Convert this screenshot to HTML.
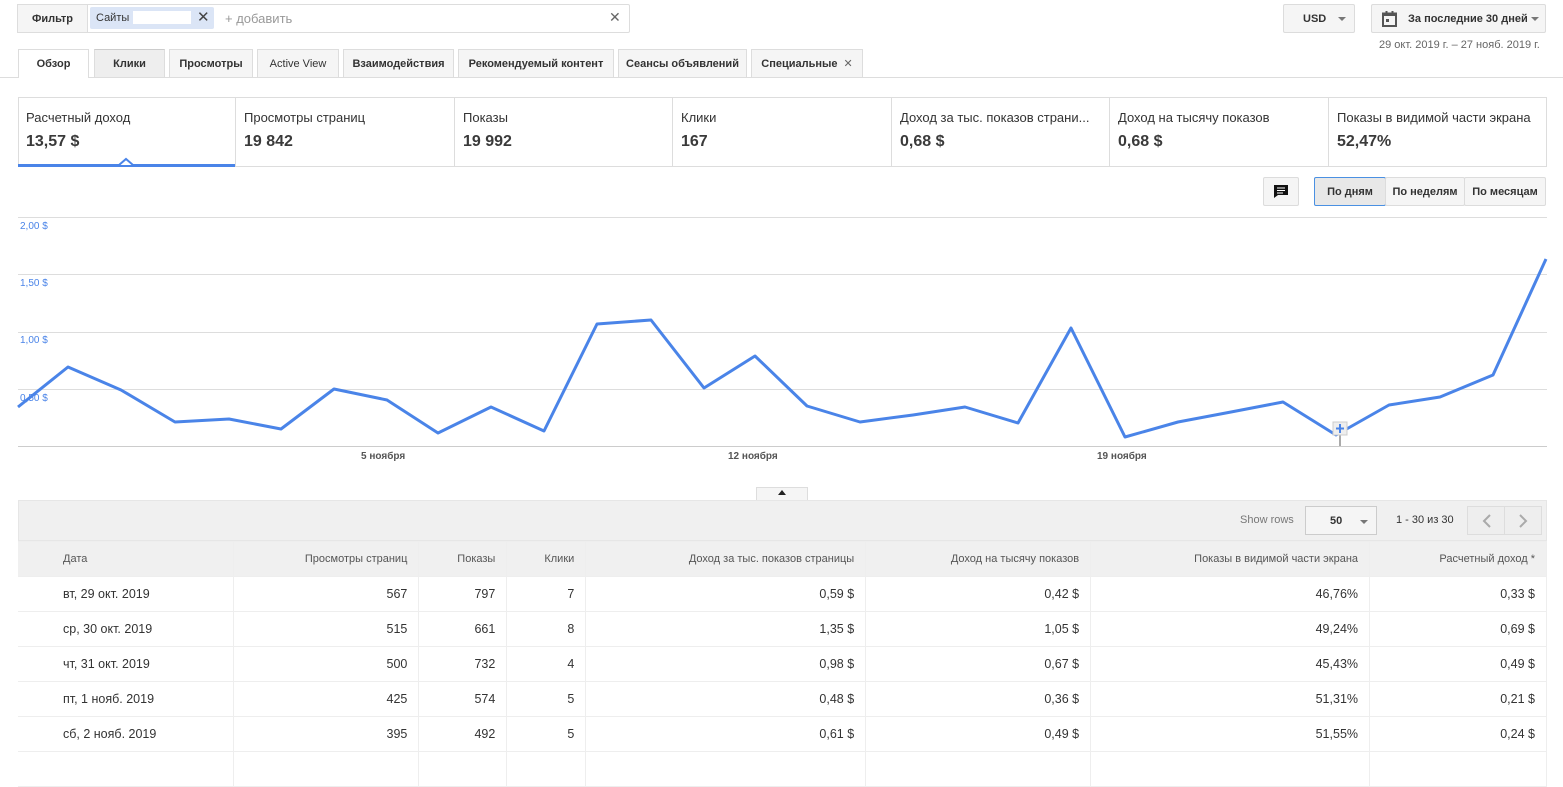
<!DOCTYPE html>
<html><head><meta charset="utf-8"><style>
*{box-sizing:border-box;margin:0;padding:0}
body{width:1563px;height:759px;overflow:hidden;background:#fff;font-family:"Liberation Sans",sans-serif;color:#333;position:relative;font-size:12px}
.a{position:absolute}
.btn{position:absolute;background:#f5f5f5;border:1px solid #dcdcdc;border-radius:2px;font-weight:bold;font-size:11px;color:#333;display:flex;align-items:center;justify-content:center}
.tab{position:absolute;top:49px;height:28px;background:#f5f5f5;border:1px solid #ddd;border-bottom:none;font-size:11px;font-weight:bold;color:#333;display:flex;align-items:center;justify-content:center}
.card{position:absolute;top:97px;height:70px;border-right:1px solid #ddd}
.card .l{position:absolute;left:8px;top:13px;font-size:13px;color:#333;white-space:nowrap}
.card .v{position:absolute;left:8px;top:36px;font-size:16px;font-weight:bold;color:#3a3a3a}
.gl{position:absolute;left:18px;width:1529px;height:1px;background:#ddd}
.yl{position:absolute;left:20px;font-size:10px;color:#4a84e8}
.xl{position:absolute;top:451px;font-size:10px;font-weight:bold;color:#555}
table{position:absolute;left:18px;top:541px;width:1529px;border-collapse:collapse;font-size:12px}
td,th{height:35px;border:1px solid #eee;text-align:right;padding-right:11px;white-space:nowrap}
th{background:#f0f0f0;font-size:11px;font-weight:normal;color:#555}
td:first-child,th:first-child{text-align:left;padding-left:45px;border-left:none}
td{color:#333;font-size:12.5px}
</style></head><body>
<div class="a" style="left:17px;top:4px;width:613px;height:29px;border:1px solid #ddd;border-radius:2px"></div>
<div class="a" style="left:17px;top:4px;width:71px;height:29px;background:#f5f5f5;border:1px solid #ddd;font-weight:bold;font-size:11px;display:flex;align-items:center;justify-content:center">Фильтр</div>
<div class="a" style="left:90px;top:7px;width:124px;height:22px;background:#dbe5f6;border-radius:2px;font-size:11px;padding:5px 6px;color:#333">Сайты</div>
<div class="a" style="left:133px;top:11px;width:58px;height:13px;background:#fff"></div>
<div class="a" style="left:197px;top:8px;font-size:15px;color:#444">✕</div>
<div class="a" style="left:225px;top:11px;font-size:13px;color:#999">+ добавить</div>
<div class="a" style="left:609px;top:9px;font-size:14px;color:#666">✕</div>
<div class="btn" style="left:1283px;top:4px;width:72px;height:29px;justify-content:flex-start;padding-left:19px">USD<span style="position:absolute;right:8px;top:12px;border:4px solid transparent;border-top:4px solid #777"></span></div>
<div class="btn" style="left:1371px;top:4px;width:175px;height:29px;justify-content:flex-start;padding-left:36px">За последние 30 дней<span style="position:absolute;right:6px;top:12px;border:4px solid transparent;border-top:4px solid #777"></span>
<svg class="a" style="left:10px;top:6px" width="15" height="16" viewBox="0 0 15 16"><rect x="1" y="2.5" width="13" height="12.5" fill="none" stroke="#555" stroke-width="2"/><rect x="1" y="2" width="13" height="3" fill="#555"/><rect x="3.5" y="0" width="2" height="3" fill="#555"/><rect x="9.5" y="0" width="2" height="3" fill="#555"/><rect x="4" y="8" width="3" height="3" fill="#555"/></svg></div>
<div class="a" style="left:1379px;top:39px;font-size:11px;color:#666">29 окт. 2019 г. – 27 нояб. 2019 г.</div>
<div class="a" style="left:0;top:77px;width:1563px;height:1px;background:#ddd"></div>
<div class="tab" style="left:18px;width:71px;background:#fff;height:29px">Обзор</div>
<div class="tab" style="left:94px;width:71px;background:#eee;border-top:1px solid #ccc">Клики</div>
<div class="tab" style="left:169px;width:84px">Просмотры</div>
<div class="tab" style="left:257px;width:82px;font-weight:normal">Active View</div>
<div class="tab" style="left:343px;width:111px">Взаимодействия</div>
<div class="tab" style="left:458px;width:156px">Рекомендуемый контент</div>
<div class="tab" style="left:618px;width:129px">Сеансы объявлений</div>
<div class="tab" style="left:751px;width:112px">Специальные <span style="font-weight:normal;color:#666;margin-left:6px">✕</span></div>
<div class="a" style="left:18px;top:97px;width:1529px;height:70px;border:1px solid #ddd"></div>
<div class="card" style="left:18px;width:218px"><div class="l">Расчетный доход</div><div class="v">13,57 $</div></div>
<div class="a" style="left:18px;top:164px;width:217px;height:3px;background:#4a84e8"></div>
<svg class="a" style="left:118px;top:157px" width="16" height="9"><path d="M1 8 L8 2 L15 8" fill="#fff" stroke="#4a84e8" stroke-width="2"/></svg>
<div class="card" style="left:236px;width:219px"><div class="l">Просмотры страниц</div><div class="v">19 842</div></div>
<div class="card" style="left:455px;width:218px"><div class="l">Показы</div><div class="v">19 992</div></div>
<div class="card" style="left:673px;width:219px"><div class="l">Клики</div><div class="v">167</div></div>
<div class="card" style="left:892px;width:218px"><div class="l">Доход за тыс. показов страни...</div><div class="v">0,68 $</div></div>
<div class="card" style="left:1110px;width:219px"><div class="l">Доход на тысячу показов</div><div class="v">0,68 $</div></div>
<div class="card" style="left:1329px;width:218px;border-right:none"><div class="l">Показы в видимой части экрана</div><div class="v">52,47%</div></div>
<div class="btn" style="left:1263px;top:177px;width:36px;height:29px"><svg width="16" height="15"><path d="M1 1h14v10H5l-4 3z" fill="#111"/><path d="M4 4h8M4 6.5h8M4 9h6" stroke="#fff" stroke-width="1"/></svg></div>
<div class="btn" style="left:1314px;top:177px;width:72px;height:29px;background:#e8e8e8;border-color:#4a90e2">По дням</div>
<div class="btn" style="left:1385px;top:177px;width:80px;height:29px">По неделям</div>
<div class="btn" style="left:1464px;top:177px;width:82px;height:29px">По месяцам</div>
<div class="gl" style="top:217px"></div><div class="gl" style="top:274px"></div><div class="gl" style="top:332px"></div><div class="gl" style="top:389px"></div><div class="gl" style="top:446px;background:#ccc"></div>
<div class="yl" style="top:221px">2,00 $</div><div class="yl" style="top:278px">1,50 $</div><div class="yl" style="top:335px">1,00 $</div><div class="yl" style="top:393px">0,50 $</div>
<div class="xl" style="left:361px">5 ноября</div><div class="xl" style="left:728px">12 ноября</div><div class="xl" style="left:1097px">19 ноября</div>
<svg class="a" style="left:0;top:0" width="1563" height="500"><polyline fill="none" stroke="#4a84e8" stroke-width="3" stroke-linejoin="round" points="18,407 68,367 121,390 175,422 229,419 281,429 334,389 387,400 438,433 491,407 544,431 597,324 651,320 704,388 755,356 807,406 860,422 913,415 965,407 1018,423 1071,328 1125,437 1178,422 1231,412 1283,402 1336,435 1389,405 1440,397 1493,375 1546,259"/>
<line x1="1340" y1="430" x2="1340" y2="446" stroke="#555"/><rect x="1333" y="422" width="14" height="13" fill="#eee" stroke="#ccc"/><path d="M1340 424v9M1336 428.5h8" stroke="#4a84e8" stroke-width="2"/></svg>
<div class="a" style="left:756px;top:487px;width:52px;height:14px;background:#f5f5f5;border:1px solid #ddd;border-bottom:none"></div>
<div class="a" style="left:778px;top:490px;border:4px solid transparent;border-bottom:5px solid #222;border-top:none"></div>
<div class="a" style="left:18px;top:500px;width:1529px;height:41px;background:#f0f0f0;border:1px solid #e6e6e6"></div>
<div class="a" style="left:1240px;top:514px;font-size:11px;color:#777">Show rows</div>
<div class="a" style="left:1305px;top:506px;width:72px;height:29px;background:#f5f5f5;border:1px solid #ccc;font-weight:bold;font-size:11px;padding:8px 0 0 24px">50<span style="position:absolute;right:8px;top:13px;border:4px solid transparent;border-top:4px solid #777"></span></div>
<div class="a" style="left:1396px;top:514px;font-size:11px;color:#333">1 - 30 из 30</div>
<div class="a" style="left:1467px;top:506px;width:75px;height:29px;background:#eee;border:1px solid #ddd"></div>
<div class="a" style="left:1504px;top:506px;width:1px;height:29px;background:#ddd"></div>
<svg class="a" style="left:1478px;top:512px" width="60" height="18"><path d="M12 3l-6 6 6 6M42 3l6 6-6 6" fill="none" stroke="#aaa" stroke-width="2"/></svg>
<table>
<colgroup><col style="width:216px"><col style="width:185px"><col style="width:88px"><col style="width:79px"><col style="width:280px"><col style="width:225px"><col style="width:279px"><col style="width:177px"></colgroup>
<tr><th>Дата</th><th>Просмотры страниц</th><th>Показы</th><th>Клики</th><th>Доход за тыс. показов страницы</th><th>Доход на тысячу показов</th><th>Показы в видимой части экрана</th><th>Расчетный доход *</th></tr>
<tr><td>вт, 29 окт. 2019</td><td>567</td><td>797</td><td>7</td><td>0,59 $</td><td>0,42 $</td><td>46,76%</td><td>0,33 $</td></tr>
<tr><td>ср, 30 окт. 2019</td><td>515</td><td>661</td><td>8</td><td>1,35 $</td><td>1,05 $</td><td>49,24%</td><td>0,69 $</td></tr>
<tr><td>чт, 31 окт. 2019</td><td>500</td><td>732</td><td>4</td><td>0,98 $</td><td>0,67 $</td><td>45,43%</td><td>0,49 $</td></tr>
<tr><td>пт, 1 нояб. 2019</td><td>425</td><td>574</td><td>5</td><td>0,48 $</td><td>0,36 $</td><td>51,31%</td><td>0,21 $</td></tr>
<tr><td>сб, 2 нояб. 2019</td><td>395</td><td>492</td><td>5</td><td>0,61 $</td><td>0,49 $</td><td>51,55%</td><td>0,24 $</td></tr>
<tr><td>&nbsp;</td><td></td><td></td><td></td><td></td><td></td><td></td><td></td></tr>
</table>
</body></html>
